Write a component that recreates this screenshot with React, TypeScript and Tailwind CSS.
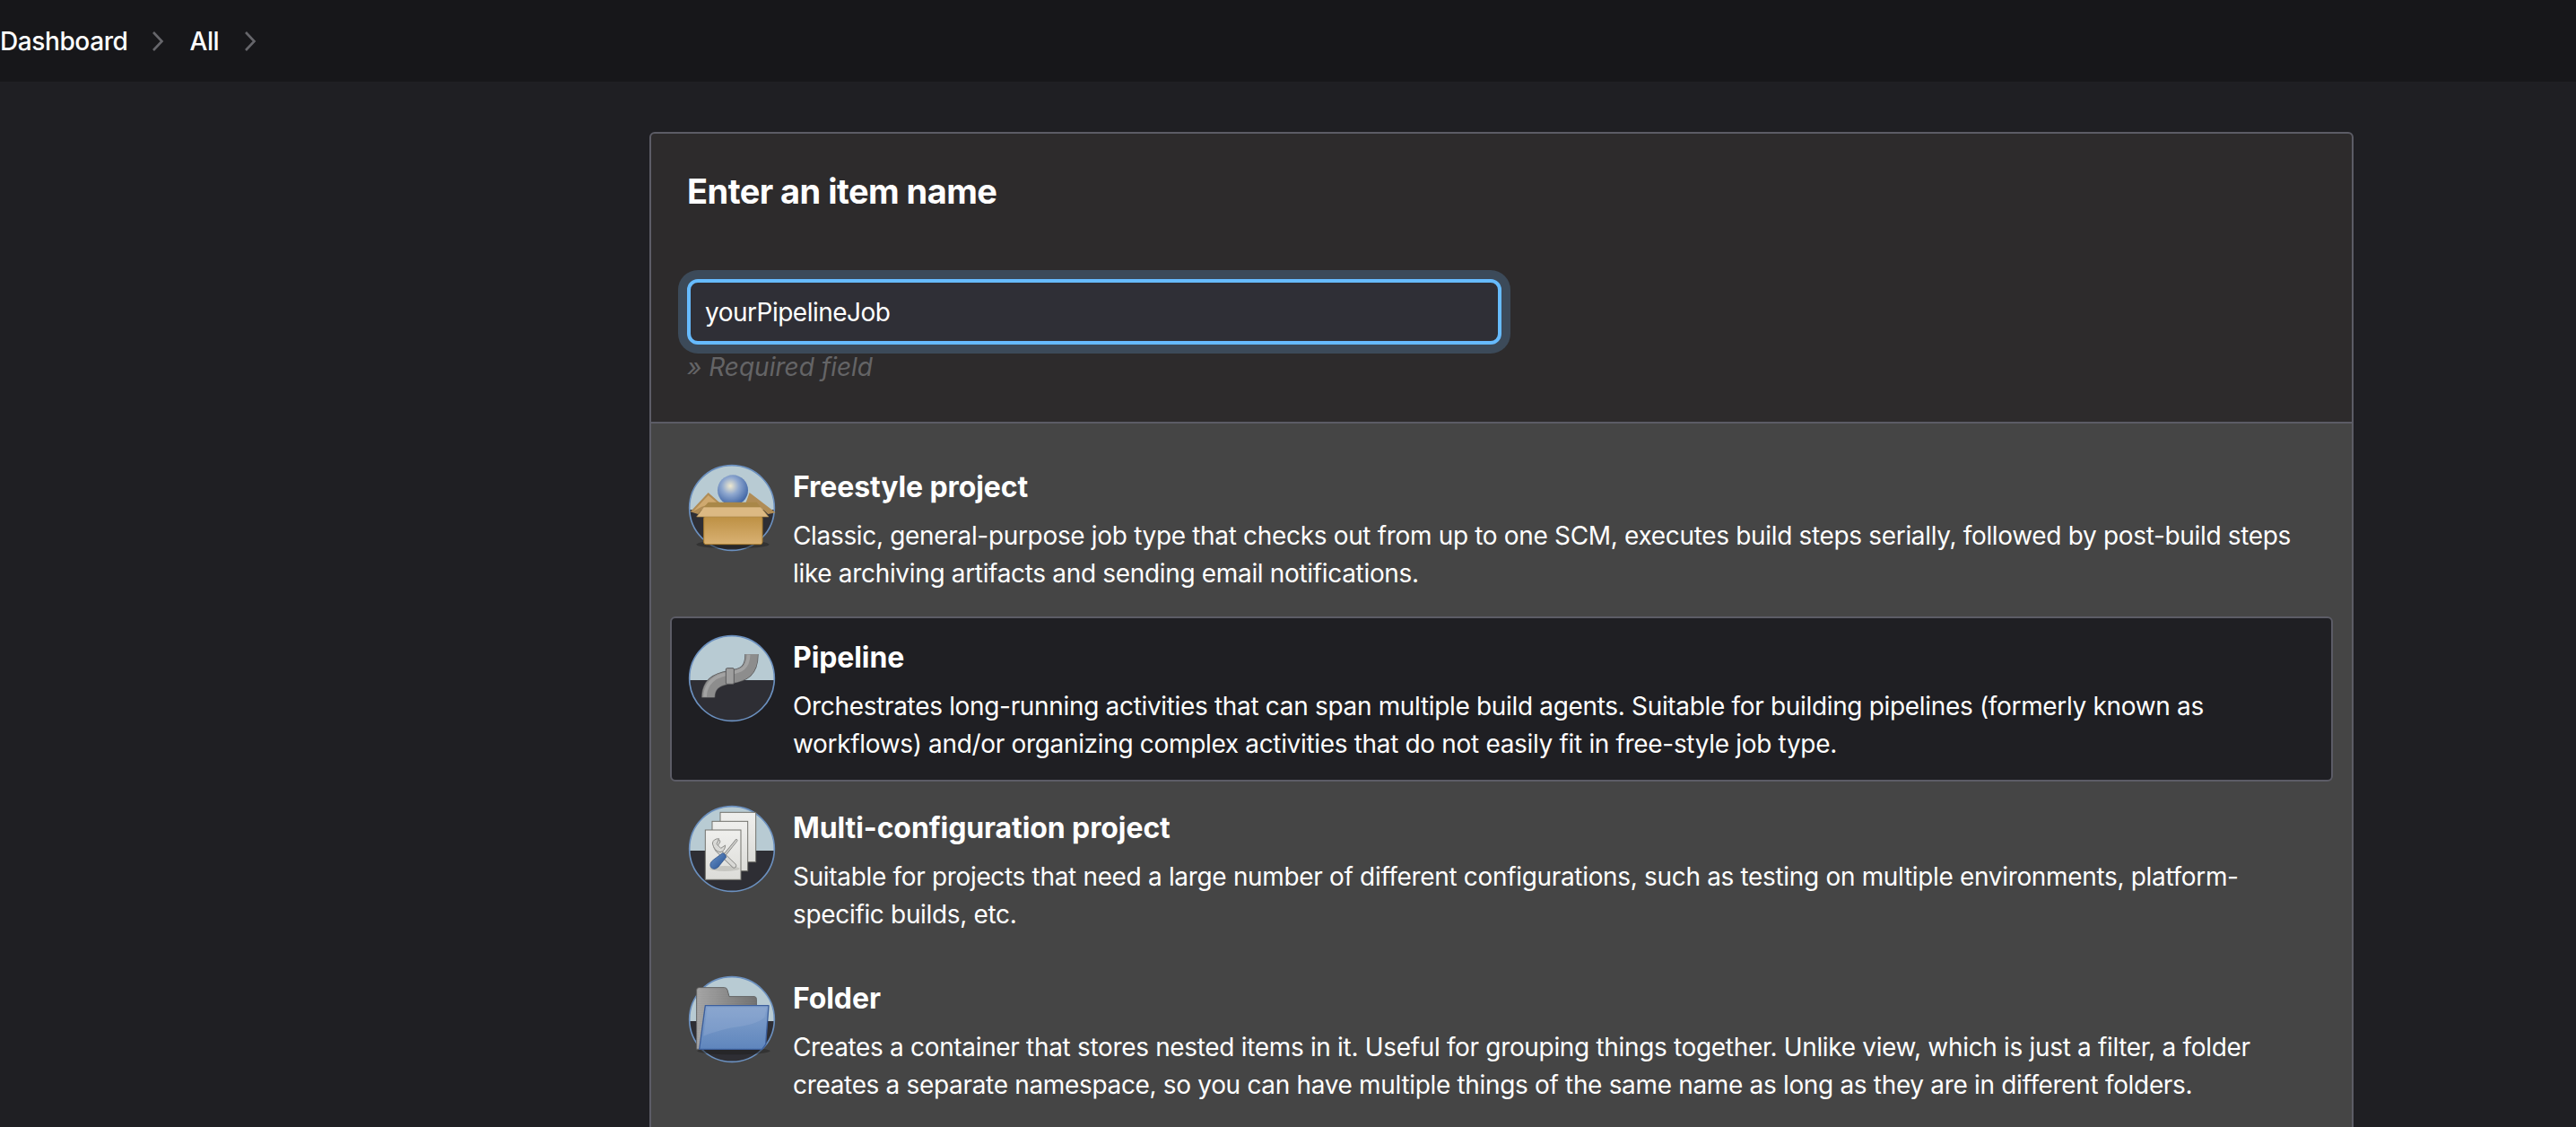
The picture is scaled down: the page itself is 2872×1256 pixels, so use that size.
import React from "react";

const font = { fontFamily: "Inter, 'Noto Sans', sans-serif" };

function IconBase({ id, children, over }: { id: string; children?: React.ReactNode; over?: React.ReactNode }) {
  return (
    <svg viewBox="85 40 288 288" width="96" height="96" className="shrink-0 overflow-visible">
      <defs>
        <clipPath id={`c-${id}`}>
          <circle cx="229" cy="184" r="142" />
        </clipPath>
      </defs>
      <g clipPath={`url(#c-${id})`}>
        <rect x="85" y="40" width="288" height="150" fill="#b8cbd3" />
        <rect x="85" y="190" width="288" height="140" fill="#2e2e34" />
        {children}
      </g>
      <circle cx="229" cy="184" r="142" fill="none" stroke="#6b90bf" strokeWidth="5" />
      {over}
    </svg>
  );
}

function BoxIcon() {
  return (
    <IconBase
      id="box"
      over={
        <>
          <defs>
            <radialGradient id="sph" cx="0.42" cy="0.36" r="0.62">
              <stop offset="0" stopColor="#efe9cf" />
              <stop offset="0.45" stopColor="#8fa8cf" />
              <stop offset="1" stopColor="#4469a8" />
            </radialGradient>
            <linearGradient id="boxf" x1="0" y1="0" x2="0" y2="1">
              <stop offset="0" stopColor="#bd9043" />
              <stop offset="1" stopColor="#d9b173" />
            </linearGradient>
          </defs>
          <ellipse cx="232" cy="306" rx="122" ry="14" fill="#1c1c1c" opacity="0.45" />
          <polygon points="90,197 150,133 190,168 135,182 116,205" fill="#b08c55" />
          <polygon points="100,195 150,142 178,165 128,180" fill="#cfa96f" />
          <polygon points="375,200 288,133 275,168 325,182 350,205" fill="#b08c55" />
          <circle cx="232" cy="125" r="51" fill="url(#sph)" />
          <polygon points="150,165 312,165 325,182 135,182" fill="#a98748" />
          <rect x="135" y="212" width="196" height="94" rx="7" fill="url(#boxf)" stroke="#a67a2d" strokeWidth="3" />
          <polygon points="111,214 135,181 325,181 352,214" fill="#dcb983" stroke="#a98748" strokeWidth="2" strokeLinejoin="round" />
        </>
      }
    />
  );
}

function PipeIcon() {
  const d = "M150,248 C150,205 175,188 222,180 C270,172 295,160 295,103";
  return (
    <IconBase id="pipe">
      <path d={d} fill="none" stroke="#58585a" strokeWidth="46" />
      <path d={d} fill="none" stroke="#8d8d8d" strokeWidth="42" />
      <path d="M139,246 C141,200 170,176 218,168 C262,160 283,150 285,105" fill="none" stroke="#a3a3a3" strokeWidth="11" />
      <rect x="209" y="150" width="27" height="53" rx="4" fill="#9e9e9e" stroke="#5a5a5c" strokeWidth="3" />
    </IconBase>
  );
}

function Page({ x, y }: { x: number; y: number }) {
  return <rect x={x} y={y} width="119" height="166" fill="url(#pg)" stroke="#74746e" strokeWidth="3" />;
}

function ToolsIcon() {
  return (
    <IconBase
      id="tools"
      over={
        <>
          <defs>
            <linearGradient id="pg" x1="0" y1="0" x2="0" y2="1">
              <stop offset="0" stopColor="#efefed" />
              <stop offset="1" stopColor="#dcdcd8" />
            </linearGradient>
            <linearGradient id="hd" x1="0" y1="0" x2="1" y2="1">
              <stop offset="0" stopColor="#6e95c8" />
              <stop offset="1" stopColor="#234f92" />
            </linearGradient>
          </defs>
          <Page x={190} y={62} />
          <Page x={163} y={92} />
          <Page x={140} y={121} />
          <ellipse cx="205" cy="250" rx="50" ry="9" fill="#c6c6c1" />
          <path d="M182,160 Q170,172 180,186 L236,240" fill="none" stroke="#8f8f8c" strokeWidth="17" strokeLinecap="round" />
          <path d="M182,160 Q170,172 180,186 L236,240" fill="none" stroke="#d9d9d6" strokeWidth="12" strokeLinecap="round" />
          <path d="M164,166 Q166,150 186,150 L178,168 L192,182 L207,172 Q206,192 190,195 Q170,192 164,166 Z" fill="#d9d9d6" stroke="#8f8f8c" strokeWidth="3" />
          <path d="M204,205 L244,156" stroke="#7d7d7b" strokeWidth="9" strokeLinecap="round" />
          <path d="M204,205 L244,156" stroke="#cfcfcc" strokeWidth="5" strokeLinecap="round" />
          <path d="M158,245 Q152,232 168,220 L198,198 Q208,200 210,212 L184,244 Q170,258 158,245 Z" fill="url(#hd)" stroke="#23477f" strokeWidth="2" />
        </>
      }
    />
  );
}

function FolderIcon() {
  return (
    <IconBase
      id="folder"
      over={
        <>
          <defs>
            <linearGradient id="fb" x1="0" y1="0" x2="1" y2="0">
              <stop offset="0" stopColor="#a0a0a0" />
              <stop offset="1" stopColor="#6a6a6a" />
            </linearGradient>
            <linearGradient id="ff" x1="0" y1="0" x2="0" y2="1">
              <stop offset="0" stopColor="#84a2cd" />
              <stop offset="1" stopColor="#5f86bd" />
            </linearGradient>
            <pattern id="st" width="6" height="6" patternUnits="userSpaceOnUse">
              <rect width="6" height="3" fill="#ffffff" opacity="0.1" />
            </pattern>
          </defs>
          <ellipse cx="235" cy="290" rx="122" ry="12" fill="#1c1c1c" opacity="0.45" />
          <path d="M111,284 L111,86 Q111,78 119,78 L204,78 Q212,78 214,86 L220,108 L304,108 Q311,108 311,116 L311,145 L140,145 L122,284 Z" fill="url(#fb)" stroke="#5e5e5e" strokeWidth="3" />
          <path d="M111,284 L111,86 Q111,78 119,78 L204,78 Q212,78 214,86 L220,108 L304,108 Q311,108 311,116 L311,145 L140,145 L122,284 Z" fill="url(#st)" />
          <polygon points="140,138 352,138 342,268 330,284 120,284" fill="url(#ff)" stroke="#3c5f9c" strokeWidth="4" strokeLinejoin="round" />
          <path d="M147,145 L345,145 L338,178 C300,210 240,205 195,220 C170,228 150,232 134,240 Z" fill="#9ab4d8" opacity="0.3" />
        </>
      }
    />
  );
}

const items = [
  {
    title: "Freestyle project",
    desc: "Classic, general-purpose job type that checks out from up to one SCM, executes build steps serially, followed by post-build steps like archiving artifacts and sending email notifications.",
    icon: <BoxIcon />,
  },
  {
    title: "Pipeline",
    desc: "Orchestrates long-running activities that can span multiple build agents. Suitable for building pipelines (formerly known as workflows) and/or organizing complex activities that do not easily fit in free-style job type.",
    icon: <PipeIcon />,
    selected: true,
  },
  {
    title: "Multi-configuration project",
    desc: "Suitable for projects that need a large number of different configurations, such as testing on multiple environments, platform-specific builds, etc.",
    icon: <ToolsIcon />,
  },
  {
    title: "Folder",
    desc: "Creates a container that stores nested items in it. Useful for grouping things together. Unlike view, which is just a filter, a folder creates a separate namespace, so you can have multiple things of the same name as long as they are in different folders.",
    icon: <FolderIcon />,
  },
];

function Chevron() {
  return (
    <svg width="14" height="22" viewBox="0 0 14 22" fill="none" className="shrink-0">
      <path d="M2 1 L11.5 11 L2 21" stroke="#66666b" strokeWidth="2.6" />
    </svg>
  );
}

export default function App() {
  return (
    <div className="h-screen overflow-hidden bg-[#1f1f23] text-white antialiased" style={font}>
      <header className="flex h-[91px] items-center bg-[#17171a] text-[28px] font-medium tracking-[-0.4px]">
        <span>Dashboard</span>
        <span className="ml-[27px]"><Chevron /></span>
        <span className="ml-[28px]">All</span>
        <span className="ml-[28px]"><Chevron /></span>
      </header>
      <main className="ml-[724px] mt-[56px] w-[1900px]">
        <section className="rounded-t-[6px] border-2 border-[#5c5c66] bg-[#2d2b2c]">
          <div className="h-[323px] border-b-2 border-[#5c5c66] pl-[40px] pt-[40px]">
            <h1 className="text-[38px] font-bold leading-[48px] tracking-[-0.55px]">Enter an item name</h1>
            <div className="mt-[74px] flex h-[73px] w-[908px] items-center rounded-[12px] border-4 border-[#66bbff] bg-[#2f2f36] pl-[16px] text-[28px] tracking-[-0.5px] shadow-[0_0_0_10px_#3c4a59]">
              yourPipelineJob
            </div>
            <p className="mt-[7px] text-[28px] italic leading-[36px] text-[#646466]">» Required field</p>
          </div>
          <ul className="flex flex-col gap-[6px] bg-[#454545] px-[21px] pb-[24px] pt-[25px]">
            {items.map((it) => (
              <li
                key={it.title}
                className={`flex h-[184px] rounded-[6px] border-2 pl-[19px] pt-[19px] ${
                  it.selected ? "border-[#5c5c66] bg-[#1f1f23]" : "border-transparent"
                }`}
              >
                {it.icon}
                <div className="ml-[20px] w-[1690px] pt-[7px]">
                  <h2 className="text-[32px] font-bold leading-[36px] tracking-[-0.1px]">{it.title}</h2>
                  <p className="mt-[15px] text-[28px] leading-[42px] tracking-[-0.33px]">{it.desc}</p>
                </div>
              </li>
            ))}
          </ul>
        </section>
      </main>
    </div>
  );
}
